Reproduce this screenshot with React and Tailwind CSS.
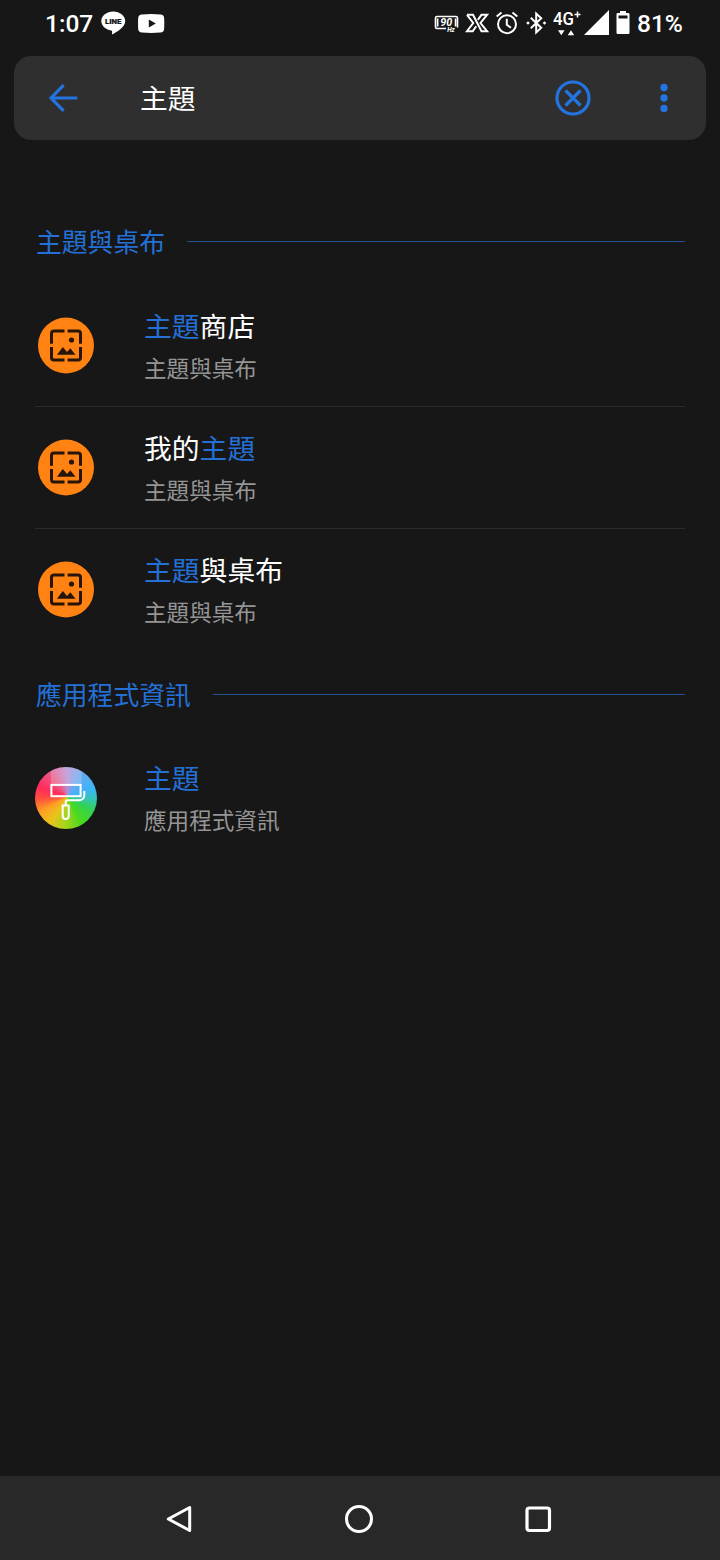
import React from 'react';

const sections = [
  {
    title: '主題與桌布',
    headerClass: 'h-[76px] pb-3',
    titleClass: 'relative top-[2px] pl-px',
    items: [
      { icon: 'wallpaper', parts: [{ text: '主題', hit: true }, { text: '商店' }], path: '主題與桌布' },
      { icon: 'wallpaper', parts: [{ text: '我的' }, { text: '主題', hit: true }], path: '主題與桌布' },
      { icon: 'wallpaper', parts: [{ text: '主題', hit: true }, { text: '與桌布' }], path: '主題與桌布' },
    ],
  },
  {
    title: '應用程式資訊',
    headerClass: 'h-[86px]',
    titleClass: 'relative top-[2px] pl-px',
    items: [{ icon: 'theme', parts: [{ text: '主題', hit: true }], path: '應用程式資訊' }],
  },
];

const WallpaperIcon = () => (
  <svg width="62" height="62" viewBox="0 0 62 62">
    <circle cx="31" cy="30.5" r="28" fill="#ff8212" />
    <g fill="none" stroke="#271509" strokeWidth="3" transform="translate(0 -.5)">
      <path d="M16.5 29.2V19a2.5 2.5 0 0 1 2.5-2.5h10.5" />
      <path d="M32.6 16.5H43a2.5 2.5 0 0 1 2.5 2.5v10.2" />
      <path d="M45.5 32.4V43a2.5 2.5 0 0 1-2.5 2.5H32.6" />
      <path d="M29.5 45.5H19a2.5 2.5 0 0 1-2.5-2.5V32.4" />
    </g>
    <circle cx="36.5" cy="25" r="2.6" fill="#271509" />
    <path d="M22 39.7l5.8-7.7 4.2 5 3.3-3.8 5.2 6.5z" fill="#271509" />
  </svg>
);

const ThemeIcon = () => (
  <div className="relative h-[62px] w-[62px] overflow-hidden rounded-full bg-[conic-gradient(from_0deg_at_52%_48%,#b48fd8_0deg,#6ba6ee_30deg,#3fb4fa_70deg,#35c4b8_95deg,#32d34f_120deg,#48da20_150deg,#a8d41c_185deg,#e8c41c_212deg,#ffa022_240deg,#ff4a40_268deg,#ff2b5c_290deg,#ee5580_320deg,#d078b4_345deg,#b48fd8_360deg)]">
    <svg className="absolute inset-0" width="62" height="62" viewBox="0 0 62 62" fill="none" stroke="#fff" strokeWidth="2">
      <rect x="16" y="0" width="30.5" height="18" fill="#fff" fillOpacity=".2" stroke="none" />
      <rect x="16.4" y="17.9" width="29.2" height="11.3" />
      <path d="M49.3 24v4.3a5 5 0 0 1-5 5H32.7a2 2 0 0 0-2 2v3.2" />
      <path d="M27.7 38.5h6v10.4a3 3 0 0 1-6 0z" />
    </svg>
  </div>
);

const StatusBar = () => (
  <div className="flex h-14 shrink-0 items-start pl-[45px] text-white">
    <span className="mt-[8px] w-[56px] text-[24.5px] leading-8 font-medium">1:07</span>
    <svg className="mt-[11px]" width="25" height="25" viewBox="0 0 25 25" fill="#fff">
      <path d="M12.2.6C5.7.6.3 4.9.3 10.1c0 4.7 4.2 8.7 9.8 9.4 1.4.2 1.1 1.4.8 3-.1.7.2 1.1 1 .7 4.6-2.5 12.3-7.1 12.3-13.1C24.2 4.9 18.8.6 12.2.6z" />
      <text x="12.2" y="13" textAnchor="middle" fontSize="7.4" fontWeight="900" fill="#171717" stroke="#171717" strokeWidth=".2" textLength="16.5" lengthAdjust="spacingAndGlyphs">LINE</text>
    </svg>
    <svg className="mt-[14px] ml-3" width="27" height="20" viewBox="0 0 27 20">
      <path d="M4 .4Q13 -.3 22.5.4Q26 .6 26.1 4Q26.5 9.5 26.1 15Q26 18.3 22.5 18.5Q13 19.3 4 18.5Q.4 18.3.2 15Q-.1 9.5.2 4Q.4.6 4 .4z" fill="#fff" />
      <path d="M10.8 5.4l7 4-7 4z" fill="#171717" />
    </svg>
    <div className="ml-[269px] flex items-start">
      <svg className="mt-[14px]" width="27" height="20" viewBox="0 0 27 20">
        <path d="M12 14.5H3Q1.5 14.5 1.5 13V4Q1.5 2.5 3 2.5h19Q23.5 2.5 23.5 4v9.5" fill="none" stroke="#fff" strokeWidth="1.6" />
        <path d="M3.6 4.5v8M21.6 4.5v8" stroke="#fff" strokeWidth="1.7" />
        <text x="12.3" y="12.2" textAnchor="middle" fontSize="10.5" fontWeight="700" fontStyle="italic" fill="#fff" textLength="12" lengthAdjust="spacingAndGlyphs">90</text>
        <text x="17" y="18.3" textAnchor="middle" fontSize="6.5" fontWeight="700" fontStyle="italic" fill="#fff">Hz</text>
      </svg>
      <svg className="mt-[13px] ml-[4px]" width="24" height="20" viewBox="0 0 24 20" fill="none" stroke="#fff" strokeWidth="2">
        <path d="M2 1.8H8L16.5 18.2H22L15.5 10L22 1.8H16.5L12.8 6.8" />
        <path d="M2 1.8L8.2 10L2 18.2H7.7L11.2 13.2" />
      </svg>
      <svg className="mt-[11px] ml-[6px]" width="24" height="24" viewBox="0 0 24 24" fill="none" stroke="#fff" strokeWidth="2">
        <circle cx="12" cy="13.2" r="9" />
        <path d="M1.7 5.6L6.5 1.6M22.3 5.6L17.5 1.6M11.8 7.8v6l4.2 3" />
      </svg>
      <svg className="mt-[11px] ml-[7px]" width="21" height="24" viewBox="0 0 21 24" fill="none" stroke="#fff" strokeWidth="2">
        <path d="M4.8 6.8l10.4 10-5 4.7V2.5l5 4.7-10.4 10" />
        <path d="M2 10.2l1.8 1.8-1.8 1.8L.2 12zM18.5 10.2l1.8 1.8-1.8 1.8-1.8-1.8z" fill="#fff" stroke="none" />
      </svg>
      <svg className="mt-[9px] ml-[6px]" width="30" height="28" viewBox="0 0 30 28" fill="#fff">
        <text x="0" y="15.7" fontSize="17.5" fontWeight="500" textLength="21" lengthAdjust="spacingAndGlyphs">4G</text>
        <path d="M24.5 2.5v6M21.5 5.500h6" stroke="#fff" strokeWidth="1.5" />
        <path d="M5 21.3h6.5l-3.2 5zM14.7 26.3h6.5L18 21.3z" />
      </svg>
      <svg className="mt-[10px] ml-[1px]" width="26" height="26" viewBox="0 0 26 26">
        <path d="M25 0v25H0z" fill="#fff" />
      </svg>
      <svg className="mt-[11px] ml-[6px]" width="14" height="24" viewBox="0 0 14 24">
        <path d="M4 0h6v2h2.2q1.3 0 1.3 1.3v18.4q0 1.3-1.3 1.3H1.8Q.5 23 .5 21.7V3.3Q.5 2 1.8 2H4z" fill="#fff" />
        <path d="M2.5 4.500h9v3h-9z" fill="#171717" />
      </svg>
      <span className="mt-[8px] ml-[7px] text-[24.5px] leading-8 font-medium">81%</span>
    </div>
  </div>
);

const SearchBar = () => (
  <div className="mx-[14px] flex h-[84px] shrink-0 items-center rounded-[17px] bg-[#2f2f2f] text-[#2374e1]">
    <svg className="ml-[34px]" width="31" height="30" viewBox="0 0 31 30" fill="none" stroke="currentColor" strokeWidth="3.2">
      <path d="M29.3 15H3.5M15.6 2.2L3 15l12.6 12.8" />
    </svg>
    <span className="ml-[61px] flex-1 pt-1 text-[27.7px] leading-10 text-white">主題</span>
    <svg className="mr-[67px]" width="38" height="38" viewBox="0 0 38 38" fill="none" stroke="currentColor" strokeWidth="3.2">
      <circle cx="19" cy="19" r="16" />
      <path d="M11.5 11.5l15 15M26.5 11.5l-15 15" />
    </svg>
    <svg className="mr-[37px]" width="10" height="30" viewBox="0 0 10 30" fill="currentColor">
      <circle cx="5" cy="4.5" r="3.7" />
      <circle cx="5" cy="15" r="3.7" />
      <circle cx="5" cy="25.5" r="3.7" />
    </svg>
  </div>
);

const ResultRow = ({ item, last }) => (
  <div className={last ? 'flex h-[122px] items-center pb-px' : 'flex h-[122px] items-center border-b border-[#2b2b2b]'}>
    {item.icon === 'wallpaper' ? <WallpaperIcon /> : <ThemeIcon />}
    <div className="ml-[47px] pt-[7px]">
      <div className="text-[27.8px] leading-[42px] text-white">
        {item.parts.map((part, index) => (
          <span key={index} className={part.hit ? 'text-[#2470d6]' : ''}>
            {part.text}
          </span>
        ))}
      </div>
      <div className="text-[22.6px] leading-[42px] text-[#959595]">{item.path}</div>
    </div>
  </div>
);

const NavBar = () => (
  <div className="flex h-[84px] shrink-0 items-center bg-[#282828] pt-[2px]">
    <svg className="ml-[164px]" width="30" height="30" viewBox="0 0 30 30" fill="none" stroke="#fff" strokeWidth="3" strokeLinejoin="round">
      <path d="M25.7 3.5v23L4.3 15z" />
    </svg>
    <svg className="ml-[150px]" width="30" height="30" viewBox="0 0 30 30" fill="none" stroke="#fff" strokeWidth="3">
      <circle cx="15" cy="15" r="12.5" />
    </svg>
    <svg className="ml-[149px]" width="30" height="30" viewBox="0 0 30 30" fill="none" stroke="#fff" strokeWidth="3.2">
      <rect x="4" y="4" width="22.5" height="22.5" rx="2.5" />
    </svg>
  </div>
);

const App = () => {
  return (
    <div className="flex h-[1560px] w-[720px] flex-col bg-[#171717] font-[Roboto,'Noto_Sans_CJK_TC',sans-serif]">
      <StatusBar />
      <SearchBar />

      {/* Search results */}
      <div className="flex-1 px-[35px] pt-[69px]">
        {sections.map((section) => (
          <div key={section.title}>
            <div className={`flex items-center gap-[22px] text-[25.8px] text-[#2470d6] ${section.headerClass}`}>
              <h2 className={section.titleClass}>{section.title}</h2>
              <div className="h-px flex-1 bg-[#245291]" />
            </div>
            {section.items.map((item, index) => (
              <ResultRow key={index} item={item} last={index === section.items.length - 1} />
            ))}
          </div>
        ))}
      </div>

      <NavBar />
    </div>
  );
};

export default App;
